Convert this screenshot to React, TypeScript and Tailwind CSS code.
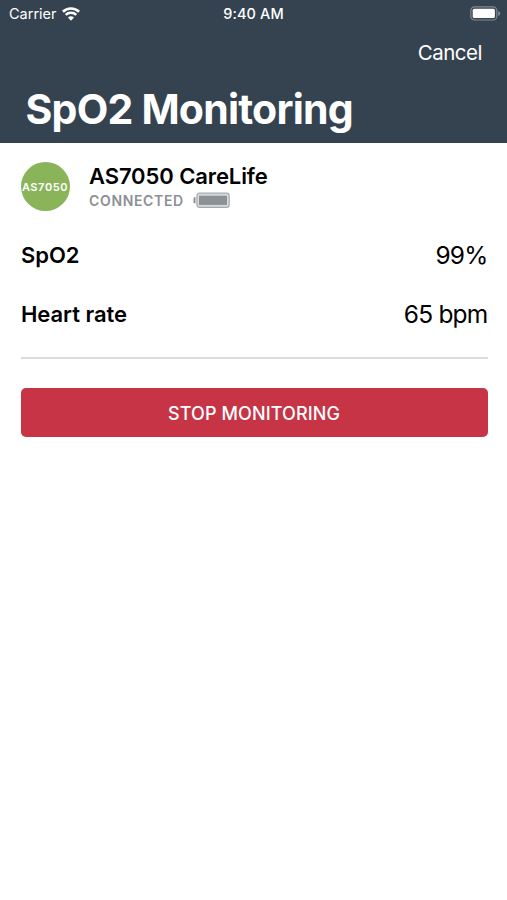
import React from "react";

function WifiIcon() {
  return (
    <svg width="18" height="14" viewBox="0 0 18 14" fill="none" stroke="white" className="ml-[5px] block">
      <path d="M0.900 4.700C5.400 0.400 12.600 0.400 17.100 4.700" strokeWidth="2.700" />
      <path d="M3.700 7.900C6.600 5.100 11.400 5.100 14.300 7.900" strokeWidth="2.500" />
      <path d="M6 10.600C7.700 8.900 10.300 8.900 12 10.600L9 13.700Z" fill="white" stroke="none" />
    </svg>
  );
}

function StatusBattery() {
  return (
    <svg width="31" height="15" viewBox="0 0 31 15" className="block">
      <rect x="0.8" y="0.8" width="26" height="13.200" rx="3.800" fill="none" stroke="#808990" strokeWidth="1.200" />
      <rect x="2.700" y="2.700" width="22.200" height="9.400" rx="1.600" fill="white" />
      <path d="M28.200 5v5c1.500-.5 2-1.500 2-2.500S29.700 5.500 28.200 5Z" fill="#808990" />
    </svg>
  );
}

function DeviceBattery() {
  return (
    <svg width="38" height="17" viewBox="0 0 38 17" className="mt-px block">
      <rect x="3.900" y="1.200" width="32.300" height="14.200" rx="2.600" fill="#d6dadd" stroke="#a5acb1" strokeWidth="1.200" />
      <rect x="6" y="3.700" width="28" height="9.200" fill="#8b9195" />
      <path d="M2.500 5v6.500H2Q.5 11.500 .5 9.800V6.700Q.5 5 2 5Z" fill="#8b9195" />
    </svg>
  );
}

function Measurement({ label, value }: { label: string; value: string }) {
  return (
    <div className="flex h-[59px] items-center justify-between">
      <span className="pl-px text-[22px] font-semibold tracking-[-0.050px]">{label}</span>
      <span className="mr-[-0.500px] text-[24.500px] tracking-[-0.800px]">{value}</span>
    </div>
  );
}

export default function App() {
  return (
    <div className="h-[900px] w-full overflow-hidden bg-white font-['Inter','Liberation_Sans',sans-serif] text-black">
      <header className="flex h-[143px] flex-col bg-[#354350] text-white">
        <div className="grid h-[27px] grid-cols-3 items-center px-[6px]">
          <div className="flex items-center pl-[3px] text-[14.500px]">Carrier<WifiIcon /></div>
          <div className="text-center text-[14.500px] font-medium tracking-[0.1px]">9:40 AM</div>
          <div className="flex justify-end"><StatusBattery /></div>
        </div>
        <div className="flex h-[52px] items-center justify-end pr-[25px] text-[20.500px] tracking-[-0.5px]">Cancel</div>
        <h1 className="pl-[25.500px] text-[41px] leading-[60px] font-bold tracking-[-0.780px] whitespace-nowrap">SpO2 Monitoring</h1>
      </header>
      <main className="px-[20px]">
        <section className="flex h-[83px] items-center pt-[4px]">
          <div className="ml-[0.500px] flex size-[49px] shrink-0 items-center justify-center rounded-full bg-[#8ab45a] pt-px text-[11px] font-semibold tracking-[0.600px] text-white">AS7050</div>
          <div className="ml-[19.500px] pt-px">
            <div className="text-[22px] leading-[26px] font-semibold tracking-[-0.1px]">AS7050 CareLife</div>
            <div className="flex h-[23px] items-center gap-[9px] text-[14px] font-semibold tracking-[0.650px] text-[#8b9095]">CONNECTED<DeviceBattery /></div>
          </div>
        </section>
        <Measurement label="SpO2" value="99%" />
        <Measurement label="Heart rate" value="65 bpm" />
        <div className="mr-[-0.500px] ml-[0.500px] mt-[13px] h-[2px] bg-[#d9dcdd]" />
        <button className="mt-[29px] ml-[0.500px] flex h-[49px] w-full items-center justify-center rounded-[5px] bg-[#c63446] pt-px text-[18px] font-medium tracking-[0.120px] text-white">STOP MONITORING</button>
      </main>
    </div>
  );
}
